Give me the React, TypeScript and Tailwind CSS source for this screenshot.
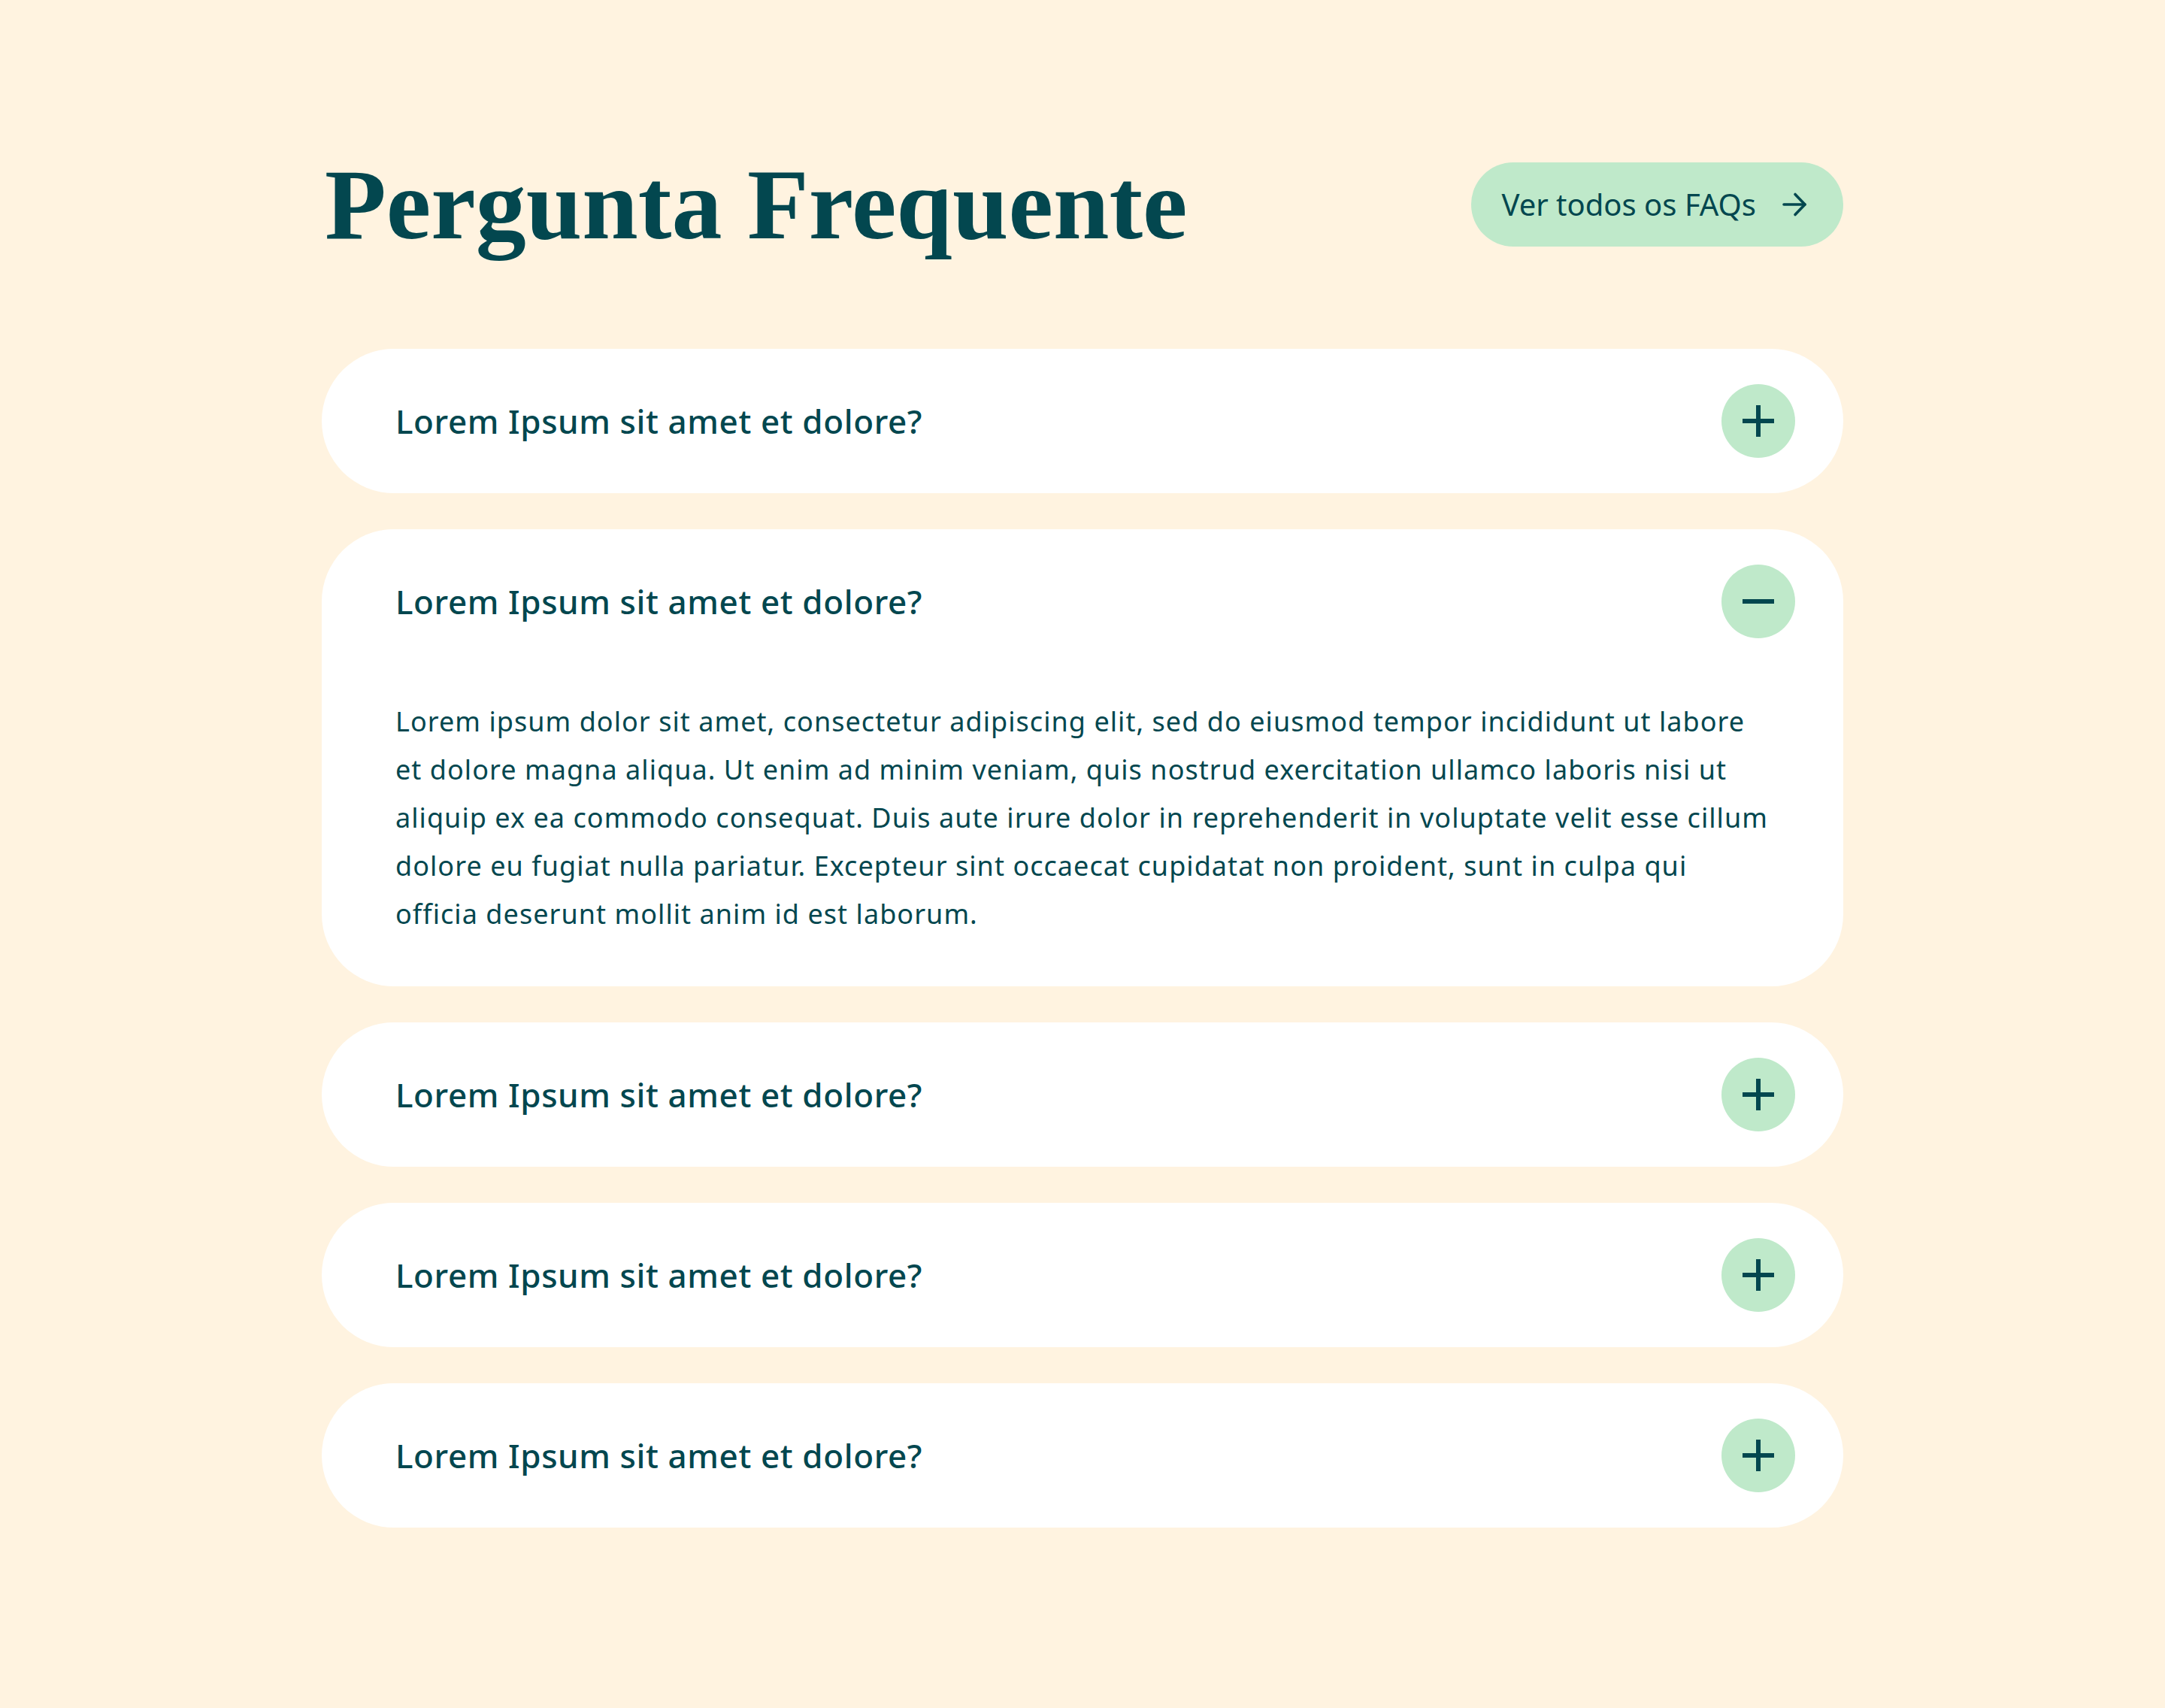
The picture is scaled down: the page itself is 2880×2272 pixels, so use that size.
import React from "react";

const teal = "#03474F";

function PlusIcon() {
  return (
    <svg width="44" height="44" viewBox="0 0 44 44" aria-hidden="true">
      <rect x="1" y="19" width="42" height="6" fill={teal} />
      <rect x="19" y="1" width="6" height="42" fill={teal} />
    </svg>
  );
}

function MinusIcon() {
  return (
    <svg width="44" height="44" viewBox="0 0 44 44" aria-hidden="true">
      <rect x="1" y="19" width="42" height="6" fill={teal} />
    </svg>
  );
}

function ArrowIcon() {
  return (
    <svg width="34" height="34" viewBox="0 0 34 34" fill="none" aria-hidden="true">
      <path d="M3 17H31" stroke={teal} strokeWidth="3.6" strokeLinecap="round" />
      <path d="M18 3.5L31 17L18 30.5" stroke={teal} strokeWidth="3.6" strokeLinecap="round" strokeLinejoin="round" />
    </svg>
  );
}

const body =
  "Lorem ipsum dolor sit amet, consectetur adipiscing elit, sed do eiusmod tempor incididunt ut labore et dolore magna aliqua. Ut enim ad minim veniam, quis nostrud exercitation ullamco laboris nisi ut aliquip ex ea commodo consequat. Duis aute irure dolor in reprehenderit in voluptate velit esse cillum dolore eu fugiat nulla pariatur. Excepteur sint occaecat cupidatat non proident, sunt in culpa qui officia deserunt mollit anim id est laborum.";

function Item({ open }: { open?: boolean }) {
  return (
    <div className="rounded-[96px] bg-white">
      <div className="flex h-[192px] items-center justify-between pl-[98px] pr-[64px]">
        <span className="text-[44px] font-medium tracking-[0.6px] text-[#03474F]">Lorem Ipsum sit amet et dolore?</span>
        <span className="flex h-[98px] w-[98px] items-center justify-center rounded-full bg-[#BFE9CA]">
          {open ? <MinusIcon /> : <PlusIcon />}
        </span>
      </div>
      {open && (
        <p className="mt-[32px] pb-[64px] pl-[98px] pr-[94px] text-[36px] leading-[64px] tracking-[1.05px] text-[#03474F]">{body}</p>
      )}
    </div>
  );
}

export default function App() {
  return (
    <div
      className="min-h-[2272px] w-full bg-[#FFF3E0] pt-[216px]"
      style={{ fontFamily: "'Noto Sans', sans-serif" }}
    >
      <div className="mx-auto w-[2024px]">
        <div className="flex items-center justify-between">
          <h1
            className="pl-[4px] text-[134px] font-bold leading-[112px] text-[#03474F]"
            style={{ fontFamily: "'Liberation Serif', serif" }}
          >
            Pergunta Frequente
          </h1>
          <button className="flex h-[112px] items-center gap-[34px] rounded-full bg-[#BFE9CA] pl-[40px] pr-[48px] text-[40px] text-[#03474F]">
            <span>Ver todos os FAQs</span>
            <ArrowIcon />
          </button>
        </div>
        <div className="mt-[136px] flex flex-col gap-[48px]">
          <Item />
          <Item open />
          <Item />
          <Item />
          <Item />
        </div>
      </div>
    </div>
  );
}
